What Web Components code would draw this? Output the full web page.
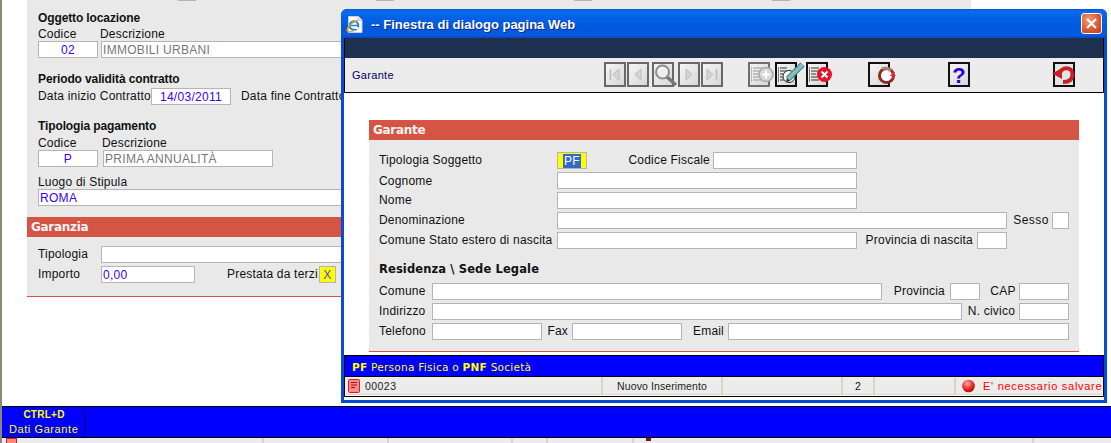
<!DOCTYPE html>
<html lang="it">
<head>
<meta charset="utf-8">
<title>Garante</title>
<style>
html,body{margin:0;padding:0;background:#fff;overflow:hidden}
body{width:1111px;height:443px;font:12px "Liberation Sans",Arial,sans-serif}
</style>
</head>
<body>
<x-page>
  <x-back-form></x-back-form>
  <x-key-bar></x-key-bar>
  <x-dialog title="-- Finestra di dialogo pagina Web">
    <x-form></x-form>
  </x-dialog>
</x-page>
<script>
const FONT='"Liberation Sans",Arial,sans-serif';
function simple(tag,css,html){
  customElements.define(tag,class extends HTMLElement{
    constructor(){super();this.attachShadow({mode:'open'}).innerHTML=`<style>${css}</style>${html||'<slot></slot>'}`;}
  });
}
simple('x-label',`:host{display:block;flex:none;font:12px/17px ${FONT};letter-spacing:.2px;color:#111;white-space:nowrap}`);
simple('x-head',`:host{display:block;font:bold 12px/14px ${FONT};letter-spacing:-.12px;color:#111;white-space:nowrap}`);
simple('x-field',`:host{display:block;flex:none;box-sizing:border-box;height:17px;border:1px solid #b5b5b5;background:#fff;font:12px/16px ${FONT};letter-spacing:.3px;color:#3a00ff;padding:0 1px;white-space:nowrap;overflow:hidden}`);
simple('x-row',`:host{display:flex;height:17px;align-items:stretch;white-space:nowrap}`);
simple('x-bar',`:host{display:block;height:20px;background:#d55545;color:#f4f4f4;font:bold 12px/20px "DejaVu Sans",sans-serif;padding-left:4px;letter-spacing:-.3px}`);
simple('x-page',`:host{display:block;position:relative;width:1111px;height:443px;overflow:hidden}`);

customElements.define('x-back-form',class extends HTMLElement{
  constructor(){super();this.attachShadow({mode:'open'}).innerHTML=`<style>
  :host{display:block;box-sizing:border-box;height:406px;border-left:2px solid #8a8778;padding-left:25px;background:#fff}
  .panel{box-sizing:border-box;width:944px;height:297px;background:#e9e9e9;border-bottom:1px solid #d55545;overflow:hidden;position:relative}
  .marks{display:flex;height:1px}
  .marks i{display:block;height:1px;background:#b5b5b5}
  .in{padding-left:11px}
  .cap{display:flex;height:14px}
  .cap x-label{line-height:14px}
  </style>
  <div class="panel">
    <div class="marks"><i style="margin-left:151px;width:18px"></i><i style="margin-left:180px;width:18px"></i><i style="margin-left:180px;width:18px"></i><i style="margin-left:180px;width:18px"></i></div>
    <div class="in">
      <x-head style="margin-top:10px">Oggetto locazione</x-head>
      <div class="cap" style="margin-top:2px"><x-label style="width:62px">Codice</x-label><x-label>Descrizione</x-label></div>
      <x-row><x-field style="width:60px;text-align:center">02</x-field><x-field style="width:540px;margin-left:3px;color:#777">IMMOBILI URBANI</x-field></x-row>
      <x-head style="margin-top:14px">Periodo validità contratto</x-head>
      <x-row style="margin-top:2px"><x-label style="width:113px">Data inizio Contratto</x-label><x-field style="width:80px;text-align:center">14/03/2011</x-field><x-label style="margin-left:10px">Data fine Contratto</x-label></x-row>
      <x-head style="margin-top:14px">Tipologia pagamento</x-head>
      <div class="cap" style="margin-top:3px"><x-label style="width:64px">Codice</x-label><x-label>Descrizione</x-label></div>
      <x-row><x-field style="width:60px;text-align:center">P</x-field><x-field style="width:170px;margin-left:5px;color:#777">PRIMA ANNUALITÀ</x-field></x-row>
      <x-label style="margin-top:8px;line-height:14px">Luogo di Stipula</x-label>
      <x-row><x-field style="width:600px">ROMA</x-field></x-row>
    </div>
    <x-bar style="margin-top:11px">Garanzia</x-bar>
    <div class="in">
      <x-row style="margin-top:9px"><x-label style="width:63px">Tipologia</x-label><x-field style="width:540px"></x-field></x-row>
      <x-row style="margin-top:3px"><x-label style="width:63px">Importo</x-label><x-field style="width:94px">0,00</x-field><x-label style="width:92px;margin-left:32px">Prestata da terzi</x-label><x-field style="width:17px;background:#ff0;color:#5a3fd0;text-align:center">X</x-field></x-row>
    </div>
  </div>`;}
});

customElements.define('x-key-bar',class extends HTMLElement{
  constructor(){super();this.attachShadow({mode:'open'}).innerHTML=`<style>
  :host{display:block;box-sizing:border-box;height:37px;border-left:2px solid #8a8778;background:#ececec;overflow:hidden}
  .b{box-sizing:border-box;height:32px;background:#00f;border-top:1px solid #000;border-bottom:1px solid #000;display:flex}
  .k{box-sizing:border-box;width:83px;height:28px;margin-top:1px;border-right:1px dotted #000;color:#ff0;font:bold 10px/14px ${FONT};text-align:center}
  .k div:first-child{height:14px;letter-spacing:.25px;padding-left:2px}
  .k div:last-child{font:11px/14px ${FONT};letter-spacing:.58px;text-align:left;padding-left:7px;white-space:nowrap}
  .cells{display:flex;height:5px;padding-left:1px}
  .cells i{display:block;height:5px;box-sizing:border-box;border-right:2px solid #d8d5c0;position:relative}
  svg{position:absolute;left:3px;top:0}
  </style>
  <div class="b"><div class="k"><div>CTRL+D</div><div>Dati Garante</div></div></div>
  <div class="cells"><i style="width:261px"><svg width="11" height="5"><rect x=".5" y=".5" width="10" height="8" fill="#f88" stroke="#c22"/></svg></i><i style="width:125px"></i><i style="width:124px"></i><i style="width:35px"></i><i style="width:86px"></i><i style="width:400px"><svg width="12" height="5" style="left:12px"><rect width="5" height="3" fill="#8a1010"/></svg></i></div>`;}
});

const grad=`<defs><linearGradient id="g" x1="0" y1="0" x2="1" y2="1"><stop offset="0" stop-color="#f6f6f6"/><stop offset="1" stop-color="#d6d6d6"/></linearGradient></defs>`;
const frame=c=>`<rect x="1" y="1" width="20" height="23" fill="url(#g)" stroke="${c}" stroke-width="2"/>`;
const lines=(c,w=9)=>[6,9,12,15,18].map(y=>`<path d="M5 ${y}h${y==12?w-3:w}" stroke="${c}"/>`).join('')+`<path d="M3.5 5v15" stroke="${c}" stroke-opacity=".6"/>`;
const ICONS={
 first:frame('#686868')+`<path d="M6.5 7v11" stroke="#bbb" stroke-width="1.5"/><path d="M15 7l-6 5.5 6 5.5z" fill="#d4d4d4" stroke="#bbb"/>`,
 prev:frame('#686868')+`<path d="M14 7l-6 5.5 6 5.5z" fill="#d4d4d4" stroke="#bbb"/>`,
 search:frame('#686868')+`<path d="M15 15l9 8" stroke="#777" stroke-width="3.5"/><circle cx="10.5" cy="10" r="6.5" fill="#eee" stroke="#8c8c8c" stroke-width="2"/><path d="M7 9a4 4 0 0 1 4-3" stroke="#fff" fill="none"/>`,
 next:frame('#686868')+`<path d="M8 7l6 5.5-6 5.5z" fill="#d4d4d4" stroke="#bbb"/>`,
 last:frame('#686868')+`<path d="M6 7l6 5.5-6 5.5z" fill="#d4d4d4" stroke="#bbb"/><path d="M15.5 7v11" stroke="#bbb" stroke-width="1.5"/>`,
 add:frame('#6e6e6e')+lines('#999')+`<circle cx="18" cy="12.5" r="7" fill="#d8d8d8" stroke="#aaa" stroke-width="1.5"/><path d="M14 12.5h8M18 8.500v8" stroke="#fff" stroke-width="2"/>`,
 edit:frame('#111')+lines('#333',7)+`<circle cx="14" cy="14.500" r="6" fill="#fff" stroke="#222"/><path d="M13 17L27.500 2.500" stroke="#2f6f70" stroke-width="6"/><path d="M13 17L27.500 2.500" stroke="#7fc0bd" stroke-width="4"/><path d="M11 20l1-4 3 3z" fill="#222"/>`,
 del:frame('#111')+lines('#333',8)+`<circle cx="18.500" cy="12.500" r="7.500" fill="#e81028"/><path d="M15.500 9.500l6 6M21.500 9.500l-6 6" stroke="#fff" stroke-width="2"/>`,
 refresh:frame('#111')+`<circle cx="18.500" cy="13.500" r="7" fill="#fff" stroke="#8a2a20" stroke-width="3"/><path d="M14 7a7 7 0 0 1 9 2" stroke="#a58a78" stroke-width="3" fill="none"/><path d="M25 10l-3 4h3l-3 5 6-6h-3l2-3z" fill="#ff1a3c"/>`,
 help:frame('#111')+`<text x="11" y="21" text-anchor="middle" font-family="Liberation Sans,sans-serif" font-weight="bold" font-size="22" fill="#2a00d0">?</text>`,
 exit:`<rect x="1" y="1" width="20" height="23" fill="#e4e4e4" stroke="#111" stroke-width="2"/><path d="M7 11.500C8 5 19 4 19.500 12C19.500 18 15 20 10 20" fill="none" stroke="#c8202a" stroke-width="4"/><path d="M-1 11.500L9 6v11z" fill="#c8202a"/>`
};
customElements.define('x-tool',class extends HTMLElement{
  constructor(){super();this.attachShadow({mode:'open'});}
  connectedCallback(){
    this.shadowRoot.innerHTML=`<style>:host{display:block;flex:none;width:22px;height:25px}svg{display:block;overflow:visible}</style><svg width="22" height="25" viewBox="0 0 22 25">${grad}${ICONS[this.getAttribute('kind')]}</svg>`;
  }
});

customElements.define('x-dialog',class extends HTMLElement{
  constructor(){super();this.attachShadow({mode:'open'});}
  connectedCallback(){
    this.shadowRoot.innerHTML=`<style>
    :host{position:absolute;left:341px;top:9px;width:766px;height:394px;box-sizing:border-box;background:#0a4ad8;border-radius:6px 6px 0 0;display:flex;flex-direction:column;padding:0 3px 3px 3px}
    .title{flex:none;height:29px;margin:0 -3px;border-radius:6px 6px 0 0;background:linear-gradient(#0a57d8 0,#0a6cf0 3px,#0462e6 8px,#0058dc 20px,#0a5ae2 26px,#0246c0 29px);display:flex;align-items:center;padding-left:5px;box-sizing:border-box;color:#fff;font:bold 13px ${FONT};text-shadow:1px 1px #0a2a90}
    .title span{padding-top:2px}
    .title svg.ie{flex:none;margin-right:8px;margin-top:2px}
    .close{margin-left:auto;margin-right:5px;width:21px;height:21px;box-sizing:border-box;border:1px solid #fff;border-radius:3px;background:radial-gradient(circle at 35% 30%,#ee9a78,#d8582e 60%,#c23a1c);display:flex;align-items:center;justify-content:center}
    .client{flex:1;min-height:0;background:#fff;display:flex;flex-direction:column;padding-bottom:3px;margin-right:0}
    .navy{flex:none;height:20px;background:#1e3050;border:solid #000;border-width:0 1px;box-sizing:border-box}
    .tool{flex:none;box-sizing:border-box;height:35px;background:#ececec;border:solid #000;border-width:0 1px 1px;display:flex;align-items:flex-start;padding-top:4px;position:relative}
    .tool .t{width:259px;flex:none;padding-left:7px;font:11px/27px ${FONT};letter-spacing:.3px;color:#000066;box-sizing:border-box}
    .main{flex:1;min-height:0;padding:27px 25px 0 25px}
    .hint{flex:none;box-sizing:border-box;height:21px;margin:0;background:#00f;border:solid #000;border-width:1px 1px 0;color:#ff0;font:10.5px/22px "DejaVu Sans",sans-serif;padding-left:7px;letter-spacing:.27px;white-space:nowrap}
    .hint b{font-weight:bold}
    .status{flex:none;box-sizing:border-box;height:21px;border:1px solid #000;border-bottom-width:1px;background:#fff;display:flex}
    .cell{box-sizing:border-box;height:18px;background:#ececec;border-right:2px solid #d8d5c0;border-bottom:1px solid #d8d5c0;font:10.5px/18px ${FONT};letter-spacing:.1px;color:#222;text-align:center;flex:none;white-space:nowrap;overflow:hidden}
    .a{width:258px;text-align:left;padding-left:3px;display:flex;align-items:center;letter-spacing:.45px}
    .a svg{margin-right:5px;flex:none}
    .b2{width:120px}.c{width:120px}.d{width:32px;color:#111}.e{width:81px}
    .f{flex:1;border-right:0;color:#f00;text-align:left;display:flex;align-items:center;padding-left:6px;font-size:11px;letter-spacing:.72px}
    .f svg{margin-right:8px;flex:none}
    </style>
    <div class="title">
      <svg class="ie" width="17" height="17" viewBox="0 0 17 17"><path d="M2.500.5h10l3.500 3.500v12.500h-13.500z" fill="#fff" stroke="#c8d0e0"/><path d="M12 .5v4h4" fill="#dde" stroke="#c8d0e0"/><ellipse cx="8" cy="9.500" rx="4.300" ry="4.300" fill="none" stroke="#1f7fe0" stroke-width="2"/><path d="M4.500 9.500h7" stroke="#1f7fe0" stroke-width="1.500"/><path d="M12.500 12H8" stroke="#fff" stroke-width="2"/><path d="M1 15C1 11 7 5 12 4.500" stroke="#e0a020" stroke-width="1.300" fill="none"/><path d="M1 15C2 16.500 6 15.500 8.500 14.500" stroke="#e0a020" stroke-width="1.300" fill="none"/></svg>
      <span>${this.getAttribute('title')}</span>
      <div class="close"><svg width="13" height="13"><path d="M2 2l9 9M11 2l-9 9" stroke="#fff" stroke-width="2.200"/></svg></div>
    </div>
    <div class="client">
      <div class="navy"></div>
      <div class="tool">
        <div class="t">Garante</div>
        <x-tool kind="first"></x-tool><x-tool kind="prev" style="margin-left:1px"></x-tool><x-tool kind="search" style="margin-left:3px"></x-tool><x-tool kind="next" style="margin-left:4px"></x-tool><x-tool kind="last" style="margin-left:1px"></x-tool>
        <x-tool kind="add" style="margin-left:25px"></x-tool><x-tool kind="edit" style="margin-left:5px"></x-tool><x-tool kind="del" style="margin-left:9px"></x-tool>
        <x-tool kind="refresh" style="margin-left:40px"></x-tool><x-tool kind="help" style="margin-left:58px"></x-tool><x-tool kind="exit" style="margin-left:83px"></x-tool>
      </div>
      <div class="main"><slot></slot></div>
      <div class="hint"><b>PF</b> Persona Fisica o <b>PNF</b> Società</div>
      <div class="status">
        <div class="cell a"><svg width="12" height="14" viewBox="0 0 12 14"><rect x=".5" y=".5" width="11" height="13" rx="1" fill="#f88" stroke="#c22"/><path d="M3 3.500h6M3 6h6M3 8.500h4" stroke="#a01010"/></svg>00023</div>
        <div class="cell b2">Nuovo Inserimento</div><div class="cell c"></div><div class="cell d">2</div><div class="cell e"></div>
        <div class="cell f"><svg width="13" height="14" viewBox="0 0 13 14"><defs><radialGradient id="r" cx=".4" cy=".3" r=".8"><stop offset="0" stop-color="#ffb0a8"/><stop offset=".5" stop-color="#ee3030"/><stop offset="1" stop-color="#900"/></radialGradient></defs><circle cx="6.500" cy="7" r="6.300" fill="url(#r)"/></svg>E' necessario salvare</div>
      </div>
    </div>`;
  }
});

customElements.define('x-form',class extends HTMLElement{
  constructor(){super();this.attachShadow({mode:'open'}).innerHTML=`<style>
  :host{display:block;box-sizing:border-box;width:710px;height:232px;background:#e9e9e9;border-bottom:1px solid #d55545}
  .in{padding:12px 0 0 10px}
  x-row{margin-bottom:3px}
  .res{font:bold 11.500px/14px "DejaVu Sans",sans-serif;letter-spacing:.12px;margin:13px 0 7px 0;color:#111}
  x-label.end{text-align:right;box-sizing:border-box}
  </style>
  <x-bar>Garante</x-bar>
  <div class="in">
    <x-row><x-label style="width:178px">Tipologia Soggetto</x-label><x-field style="width:30px;background:#ff0;text-align:center;padding:0"><span style="background:#316ac5;color:#fff;padding:0 1px">PF</span></x-field><x-label class="end" style="width:126px;padding-right:3px">Codice Fiscale</x-label><x-field style="width:144px"></x-field></x-row>
    <x-row><x-label style="width:178px;line-height:18px">Cognome</x-label><x-field style="width:300px"></x-field></x-row>
    <x-row><x-label style="width:178px">Nome</x-label><x-field style="width:300px"></x-field></x-row>
    <x-row><x-label style="width:178px">Denominazione</x-label><x-field style="width:450px"></x-field><x-label class="end" style="width:45px;padding-right:3px;letter-spacing:.5px">Sesso</x-label><x-field style="width:17px"></x-field></x-row>
    <x-row><x-label style="width:178px">Comune Stato estero di nascita</x-label><x-field style="width:300px"></x-field><x-label class="end" style="width:120px;padding-right:4px">Provincia di nascita</x-label><x-field style="width:30px"></x-field></x-row>
    <div class="res">Residenza \\ Sede Legale</div>
    <x-row><x-label style="width:53px">Comune</x-label><x-field style="width:450px"></x-field><x-label class="end" style="width:68px;padding-right:5px">Provincia</x-label><x-field style="width:30px"></x-field><x-label class="end" style="width:39px;padding-right:3px;letter-spacing:.4px">CAP</x-label><x-field style="width:50px"></x-field></x-row>
    <x-row><x-label style="width:53px">Indirizzo</x-label><x-field style="width:530px"></x-field><x-label class="end" style="width:57px;padding-right:4px">N. civico</x-label><x-field style="width:50px"></x-field></x-row>
    <x-row><x-label style="width:53px">Telefono</x-label><x-field style="width:110px"></x-field><x-label class="end" style="width:30px;padding-right:4px">Fax</x-label><x-field style="width:110px"></x-field><x-label class="end" style="width:46px;padding-right:4px">Email</x-label><x-field style="width:341px"></x-field></x-row>
  </div>`;}
});
</script>
</body>
</html>
